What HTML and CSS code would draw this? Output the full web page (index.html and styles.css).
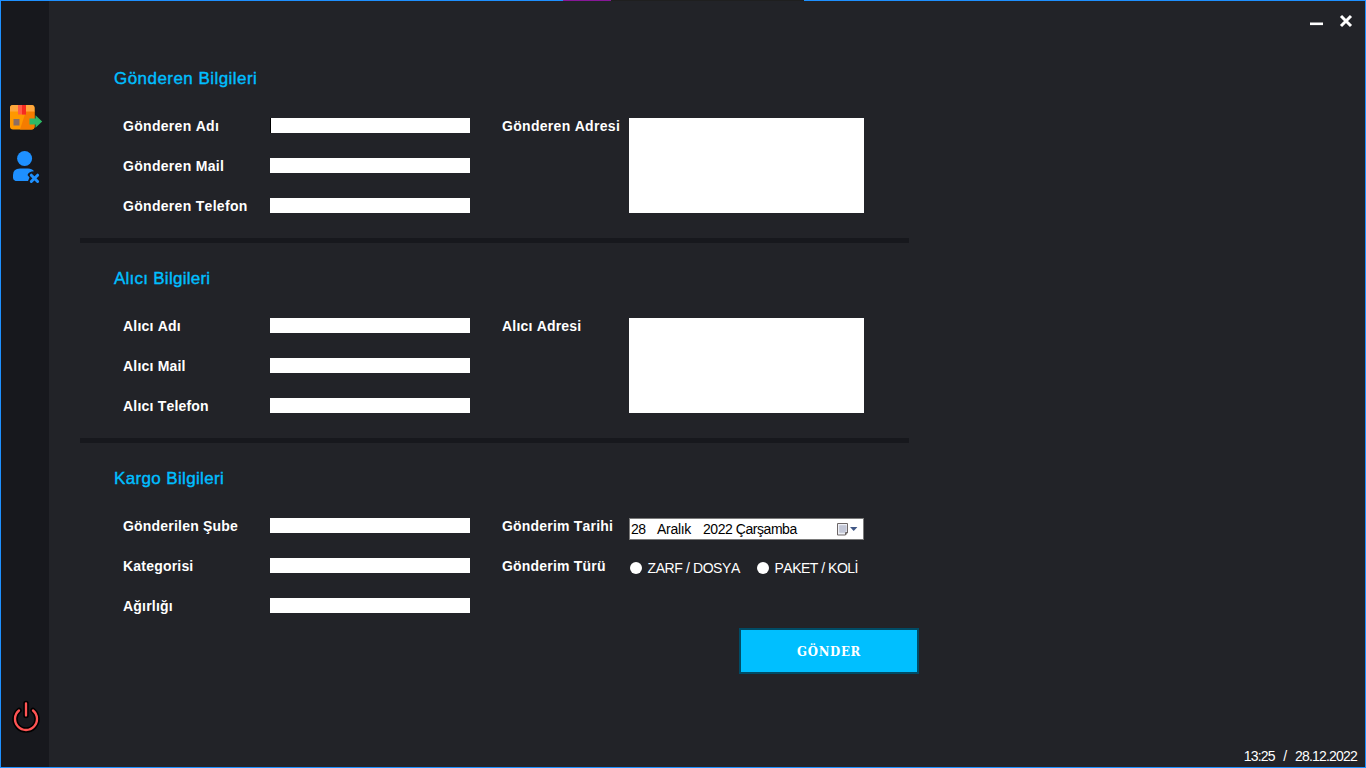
FILE: index.html
```html
<!DOCTYPE html>
<html lang="tr">
<head>
<meta charset="utf-8">
<title>Kargo</title>
<link rel="stylesheet" href="styles.css">
</head>
<body>
<div class="window">
  <div class="edge"><i class="edge-purple"></i><i class="edge-dark"></i></div>
  <nav class="sidebar">
    <svg class="icon-box" width="34" height="26" viewBox="0 0 34 26">
      <rect x="0" y="0" width="24.500" height="24.500" rx="3" fill="#ff9800"/>
      <path d="M16 6h8.500v15.500q0 3-3 3H10z" fill="#f57c00"/>
      <path d="M3 0h18.500q3 0 3 3v3.500H0V3q0-3 3-3z" fill="#ffa73d"/>
      <path d="M8 0h8v9.500H8z" fill="#ff5b46"/>
      <path d="M12 0h4v9.500h-4z" fill="#f62b20"/>
      <rect x="3.500" y="14" width="6" height="6.500" fill="#8d6e63"/>
      <path d="M19.500 13.500h6v-3.200l6.700 6.200-6.700 6.200v-3.200h-6z" fill="#2eb866"/>
    </svg>
    <svg class="icon-user" width="28" height="33" viewBox="0 0 28 33">
      <circle cx="11.600" cy="7.500" r="7.500" fill="#1e90ff"/>
      <path d="M0 27v-3q0-6.500 7-6.500h8q4 0 6 2.800-5 0-6.500 3.700l2 2.500-1.500 3.500H2.500Q0 29 0 27z" fill="#1e90ff"/>
      <path d="M18.300 24.200l6.300 6.300M24.600 24.200l-6.300 6.300" stroke="#1e90ff" stroke-width="3" stroke-linecap="round"/>
    </svg>
    <svg class="icon-power" width="28" height="34" viewBox="0 0 28 34" fill="none" stroke-linecap="round">
      <path d="M7 10.500a11 11 0 1 0 14 0M14 3.500v12" stroke="#000" stroke-width="5.500"/>
      <path d="M7 10.500a11 11 0 1 0 14 0M14 3.500v12" stroke="#ff5454" stroke-width="2.300"/>
    </svg>
  </nav>
  <div class="main">
    <div class="controls">
      <svg width="14" height="16" viewBox="0 0 14 16"><path d="M1 10.800h13" stroke="#fff" stroke-width="2.600"/></svg>
      <svg width="14" height="16" viewBox="0 0 14 16"><path d="M2 3l10 10M12 3L2 13" stroke="#fff" stroke-width="3"/></svg>
    </div>
    <form class="form">
      <section class="section">
        <h2>Gönderen Bilgileri</h2>
        <div class="fields">
          <label>Gönderen Adı</label><span class="input focused"></span>
          <label class="right">Gönderen Adresi</label><span class="area"></span>
          <label class="left">Gönderen Mail</label><span class="input"></span>
          <label class="left">Gönderen Telefon</label><span class="input"></span>
        </div>
      </section>
      <section class="section receiver">
        <h2>Alıcı Bilgileri</h2>
        <div class="fields">
          <label>Alıcı Adı</label><span class="input"></span>
          <label class="right">Alıcı Adresi</label><span class="area"></span>
          <label class="left">Alıcı Mail</label><span class="input"></span>
          <label class="left">Alıcı Telefon</label><span class="input"></span>
        </div>
      </section>
      <section class="section last">
        <h2>Kargo Bilgileri</h2>
        <div class="fields">
          <label>Gönderilen Şube</label><span class="input"></span>
          <label class="right">Gönderim Tarihi</label>
          <div class="date">
            <span class="day">28</span><span class="month">Aralık</span><span class="year">2022 Çarşamba</span>
            <svg width="21" height="13" viewBox="0 0 21 13">
              <path d="M.5.500h10v9l-2 2.500h-8z" fill="#eef0f6" stroke="#6d6767"/>
              <path d="M2.500 3h6.500M2.500 5h6.500M2.500 7h6.500M2.500 9h6.500M3 2.500v7M5 2.500v7M7 2.500v7M9 2.500v6" stroke="#a5abc0" stroke-width=".7"/>
              <path d="M8.500 12v-2.500h2.500" fill="none" stroke="#6d6767"/>
              <path d="M13 4h7.400l-3.700 4z" fill="#405785"/>
            </svg>
          </div>
          <label class="left">Kategorisi</label><span class="input"></span>
          <label class="right">Gönderim Türü</label>
          <div class="radios"><span class="radio">ZARF / DOSYA</span><span class="radio second">PAKET / KOLİ</span></div>
          <label class="left">Ağırlığı</label><span class="input"></span>
        </div>
        <button type="button" class="send">GÖNDER</button>
      </section>
    </form>
    <footer class="status"><span>13:25</span><span>/</span><span>28.12.2022</span></footer>
  </div>
</div>
</body>
</html>
```
FILE: styles.css
```css
* { box-sizing: border-box; }
body { margin: 0; font-family: "Liberation Sans", sans-serif; color: #fff; font-kerning: none; }
.window { position: relative; display: flex; width: 1366px; height: 768px; border: 1px solid #1e90ff; background: #222328; }
.edge { position: absolute; top: -1px; left: 562px; display: flex; height: 1px; }
.edge-purple { width: 48px; background: #881798; }
.edge-dark { width: 193px; background: #1f1f1f; }
.sidebar { display: flex; flex-direction: column; width: 48px; background: #17181d; padding: 104px 0 33px 9px; }
.icon-user { margin: 20px 0 0 3px; }
.icon-power { margin: auto 0 0 2px; }
.main { flex: 1; display: flex; flex-direction: column; }
.controls { display: flex; justify-content: flex-end; gap: 16px; height: 37px; padding: 12px 12px 0 0; }
.form { width: 829px; margin-left: 31px; }
.section { height: 200px; padding: 26px 45px 0 34px; border-bottom: 5px solid #17181d; }
.section.last { height: 245px; border: 0; padding-right: 0; }
.section:first-child { height: 205px; padding-top: 31px; }
h2 { margin: 0; height: 20px; font-size: 17px; line-height: 20px; font-weight: 400; letter-spacing: .45px; color: #00bfff; -webkit-text-stroke: .4px #00bfff; white-space: nowrap; }
.receiver h2 { letter-spacing: .25px; }
.last h2 { letter-spacing: .35px; }
.fields { display: grid; grid-template-columns: 147px 232px 127px 235px; grid-auto-rows: 15px; row-gap: 25px; margin: 29px 0 0 9px; }
label { font-size: 14px; font-weight: 700; line-height: 17px; letter-spacing: .3px; white-space: nowrap; }
.receiver label { letter-spacing: .2px; }
.last label { letter-spacing: .2px; }
.left { grid-column: 1; }
.right { grid-column: 3; }
.input { width: 200px; height: 15px; background: #fff; }
.focused { border-left: 1px solid #000; }
.area { grid-column: 4; grid-row: 1 / 4; height: 95px; background: #fff; }
.date { display: flex; align-items: center; height: 22px; border: 1px solid #7a7a7a; background: #fff; color: #000; font-size: 14px; letter-spacing: -.45px; padding: 0 5px 0 1px; white-space: nowrap; }
.day { width: 26px; }
.month { width: 46px; letter-spacing: -.3px; }
.date svg { margin-left: auto; }
.radios { display: flex; height: 21px; font-size: 14px; line-height: 21px; white-space: nowrap; }
.radio { display: flex; align-items: center; width: 127px; letter-spacing: -.4px; }
.radio::before { content: ""; width: 12px; height: 12px; margin: 0 6px 2px .5px; border-radius: 50%; background: #fff; }
.radio.second { width: auto; letter-spacing: -.5px; }
.send { display: block; width: 180px; height: 46px; margin: 15px 0 0 625px; padding: 0; border: 2px solid #004c66; background: #00bfff; color: #fff; font: bold 13px "DejaVu Serif Condensed", "DejaVu Serif", serif; letter-spacing: .7px; }
.status { display: flex; justify-content: flex-end; gap: 8.500px; margin-top: auto; padding: 0 8px 3px 0; font-size: 14px; line-height: 16px; letter-spacing: -.8px; }
```
